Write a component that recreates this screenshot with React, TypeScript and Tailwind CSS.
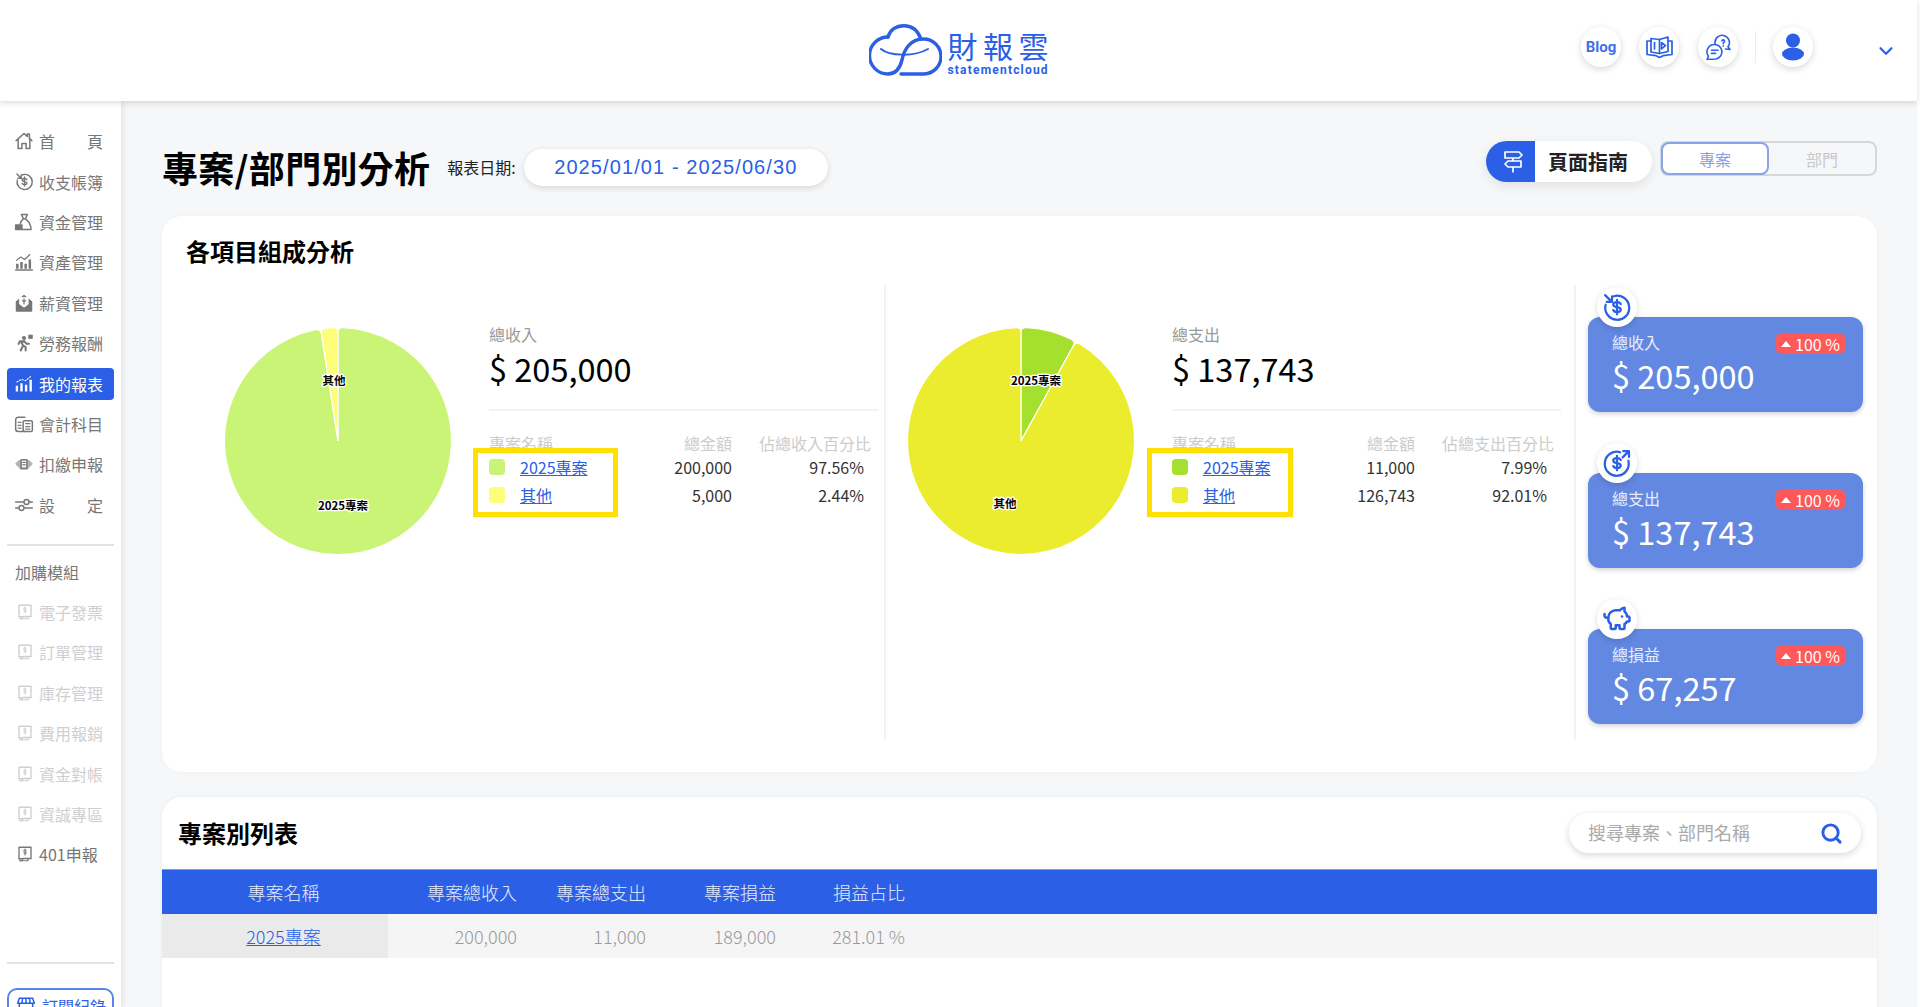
import { ChevronDown, PiggyBank, Search } from "lucide-react"
import type { ReactNode } from "react"

const BLUE = "#2a5fe6"

function Ico({ children, size = 18 }: { children: ReactNode; size?: number }) {
  return (
    <svg width={size} height={size} viewBox="0 0 24 24" fill="none" stroke="currentColor" strokeWidth="1.8" strokeLinecap="round" strokeLinejoin="round">
      {children}
    </svg>
  )
}

const Dollar = () => <path d="M15 9.6c-.5-1-1.5-1.5-3-1.5-1.7 0-3 .8-3 2 0 2.8 6 1.2 6 3.9 0 1.2-1.3 2-3 2-1.5 0-2.5-.5-3-1.5M12 6.2v11.6" />

const IncomeIcon = ({ size = 18 }: { size?: number }) => (
  <Ico size={size}>
    <path d="M9.5 3.4a9.6 9.6 0 1 1-6.6 6.8" />
    <path d="M2.5 2.5l5 5M8 3.5v4.4H3.8" />
    <Dollar />
  </Ico>
)

const ExpenseIcon = ({ size = 18 }: { size?: number }) => (
  <Ico size={size}>
    <path d="M14.5 3.4a9.6 9.6 0 1 0 6.6 6.8" />
    <path d="M16.5 7.5l5-5M17 2.5h4.6v4.6" />
    <Dollar />
  </Ico>
)

const HomeIcon = () => (
  <Ico size={20}>
    <path d="M2.5 11.5L12 3l4 3.5V3.5h2.5v5.2l3 2.8M5 9.5V21h4.5v-6h5v6H19V9.5" />
  </Ico>
)

const FundIcon = () => (
  <Ico size={20}>
    <path d="M9 3h7l-2.2 5h-2.6zM11 8.5c-2 1.5-3 3.5-3.4 5.5M14 8.5c4 3 6.500 7 6.500 12.500H10" />
    <path d="M2 15.500h7.500V21H2z" fill="currentColor" />
  </Ico>
)

const AssetIcon = () => (
  <Ico size={20}>
    <path d="M2 21.500h20" />
    <path d="M4 20v-6M9 20v-8M14 20v-6M19 20V9" strokeWidth="3" strokeLinecap="butt" />
    <path d="M3 10l5-4 5 3 6-6" strokeWidth="1.400" />
  </Ico>
)

const SalaryIcon = () => (
  <Ico size={20}>
    <path d="M3 10.500L12 3l9 7.500V21.500H3z" fill="currentColor" />
    <path d="M7 5.500h10v8l-5 3.500-5-3.500z" fill="#fff" stroke="#fff" strokeWidth="1" />
    <path d="M12 7v6M10 9.500h4" strokeWidth="1.500" />
  </Ico>
)

const LaborIcon = () => (
  <Ico size={20}>
    <circle cx="12" cy="6" r="2.500" fill="currentColor" stroke="none" />
    <path d="M8 21l3-6-2-3 3-2.500 3 3.500h3M11 15l3 2v4M12 9.500L7 10l-1.500 3" strokeWidth="2.400" />
    <path d="M18 2.500h4v4h-4z" fill="currentColor" strokeWidth="1" />
  </Ico>
)

const ReportIcon = () => (
  <Ico size={20}>
    <path d="M3.500 21v-7M9 21V11M14.500 21v-8M20 21V7" strokeWidth="2.800" strokeLinecap="butt" />
    <path d="M3.500 9.500L9 6.500l5 1.500 6-5" strokeWidth="1.300" strokeDasharray="1.500 2" />
  </Ico>
)

const AccountIcon = () => (
  <Ico size={20}>
    <path d="M13 4H5a3 3 0 0 0-3 3v11a3 3 0 0 0 3 3h8" />
    <rect x="11" y="8" width="11" height="13" rx="1.500" />
    <path d="M5 10h3.500M5 13.500h3.500M5 17h3.500M14 11.500h5M14 15h5M14 18h5" strokeWidth="1.500" />
  </Ico>
)

const TaxIcon = () => (
  <Ico size={20}>
    <path d="M1.500 11.500C4 8 7.500 6 12 6s8 2 10.500 5.500c-1 2-2.500 3.500-4 4.500l-2 3h-9l-2-3c-1.500-1-3-2.500-4-4.500z" fill="currentColor" stroke="none" opacity=".55" />
    <rect x="8.500" y="7" width="7" height="10" rx="1" fill="#fff" />
    <path d="M10.500 10h3M10.500 13h3" strokeWidth="1.300" />
  </Ico>
)

const SettingIcon = () => (
  <Ico size={20}>
    <path d="M2 8.500h9M18.500 8.500H22M2 15.500h3.500M13 15.500h9" />
    <circle cx="15" cy="8.500" r="3" />
    <circle cx="9" cy="15.500" r="3" />
  </Ico>
)

const ModuleIcon = () => (
  <Ico size={18}>
    <path d="M4 3h16v15H9.500l-2 3H5.500l-1.500-3z" />
    <path d="M4 18h16M8 18v3h8v-3" strokeWidth="1.600" />
    <path d="M14 7.500c-.4-.7-1-1-2-1-1.200 0-2 .5-2 1.300 0 1.900 4 .8 4 2.700 0 .8-.8 1.300-2 1.300-1 0-1.600-.3-2-1M12 5.500v8" strokeWidth="1.300" />
  </Ico>
)

const ShopIcon = () => (
  <Ico size={20}>
    <path d="M4 5h16l2 6H2zM4 11v9h16v-9M8 5l-1 6M12 5v6M16 5l1 6" />
  </Ico>
)

const BookVideoIcon = () => (
  <svg width="29" height="24" viewBox="0 0 29 24" fill="none" stroke={BLUE} strokeWidth="1.700" strokeLinejoin="round" strokeLinecap="round">
    <path d="M6 3.500l8.500 1 8.500-2.500v14.500l-8.500 2-8.500-1.500z" />
    <path d="M14.500 4.500V18.500" />
    <path d="M6 6H2v13.500l9 1.200 3.500 1.800 3.500-1.800 9-1.200V6h-4" />
    <path d="M16.500 7.500l4 3.200-4 3.200z" />
    <path d="M9.500 7.500v6.500" />
  </svg>
)

const ChatIcon = () => (
  <svg width="26" height="26" viewBox="0 0 26 26" fill="none" stroke={BLUE} strokeWidth="1.600" strokeLinejoin="round" strokeLinecap="round">
    <path d="M10 10.500V8.500a7.200 7.200 0 1 1 13 4.300l2 2.700-4.500-.5" />
    <path d="M17 7c0-1.200 2.500-1.800 2.500 0 0 1.300-1.300 1.200-1.300 2.700" />
    <path d="M18.200 11.800v.2" />
    <path d="M9.500 10.500a7.300 7.300 0 0 1 1.300 14.500L2 25.500l1.500-3.300a7.300 7.300 0 0 1 6-11.700z" fill="#fff" />
    <path d="M6.500 16.200h6.500M6.500 19.400h4" />
  </svg>
)

const UserIcon = () => (
  <svg width="32" height="32" viewBox="0 0 32 32" fill={BLUE}>
    <circle cx="16" cy="9.500" r="7" />
    <ellipse cx="16" cy="23" rx="11" ry="6.500" />
  </svg>
)

const SignIcon = () => (
  <svg width="22" height="24" viewBox="0 0 22 24" fill="none" stroke="#fff" strokeWidth="1.700" strokeLinejoin="round">
    <path d="M3 2h14l3 3-3 3H3zM19 11v6H6l-3-3 3-3zM11 8v3M11 17v5.500" />
  </svg>
)

const Logo = () => (
  <div className="flex items-center gap-[6px]">
    <svg width="73" height="52" viewBox="0 0 73 52" fill="none" stroke={BLUE} strokeWidth="3.400" strokeLinecap="round">
      <path d="M19 13A18 18 0 1 0 19 50C27 50 31 44 33 36C35 25 42 15 54 15A17.500 17.500 0 0 1 55 50H32" />
      <path d="M19 13C21 6 27 1.700 35 1.700C43 1.700 49 7 52 15" />
      <path d="M12 25C20 32 45 33 59 25" strokeWidth="2" />
    </svg>
    <div className="flex flex-col w-[101px] pt-[7px]">
      <span className="text-[30px] leading-[30px] font-normal tracking-[5.5px] text-[#2a5fe6] whitespace-nowrap">財報雲</span>
      <span className="mt-[3px] font-['Roboto',sans-serif] text-[12px] leading-[14px] font-bold tracking-[1.2px] text-[#2a5fe6] whitespace-nowrap">statementcloud</span>
    </div>
  </div>
)

function Header() {
  const circle = "w-10 h-10 rounded-full bg-white shadow-[0_2px_7px_rgba(0,0,0,0.16)] flex items-center justify-center"
  return (
    <header className="relative z-20 h-[101px] shrink-0 bg-white shadow-[0_2px_6px_rgba(0,0,0,0.14)] grid grid-cols-3 items-center">
      <div />
      <div className="flex justify-center pb-[1px]"><Logo /></div>
      <div className="flex items-center justify-end pr-[20px]">
        <div className="flex items-center pb-[7px]">
          <div className={circle}>
            <span className="font-['Roboto',sans-serif] font-bold text-[15px] text-[#3f70e8]">Blog</span>
          </div>
          <div className={`${circle} ml-[18px]`}><BookVideoIcon /></div>
          <div className={`${circle} ml-[19px]`}><ChatIcon /></div>
          <div className="w-px h-8 bg-[#eeeeee] ml-[17px]" />
          <div className={`${circle} ml-[17px]`}><UserIcon /></div>
        </div>
        <ChevronDown className="ml-[62px] mt-[1px]" size={22} strokeWidth={2.4} color={BLUE} />
      </div>
    </header>
  )
}

const mainMenu = [
  { label: "首頁", icon: <HomeIcon />, spread: true },
  { label: "收支帳簿", icon: <IncomeIcon size={19} /> },
  { label: "資金管理", icon: <FundIcon /> },
  { label: "資產管理", icon: <AssetIcon /> },
  { label: "薪資管理", icon: <SalaryIcon /> },
  { label: "勞務報酬", icon: <LaborIcon /> },
  { label: "我的報表", icon: <ReportIcon />, active: true },
  { label: "會計科目", icon: <AccountIcon /> },
  { label: "扣繳申報", icon: <TaxIcon /> },
  { label: "設定", icon: <SettingIcon />, spread: true },
]

const addons = ["電子發票", "訂單管理", "庫存管理", "費用報銷", "資金對帳", "資誠專區", "401申報"]

function Sidebar() {
  return (
    <aside className="relative z-10 w-[121px] shrink-0 bg-white shadow-[2px_0_6px_rgba(0,0,0,0.09)] pt-[20px]">
      {mainMenu.map((m) => (
        <div key={m.label} className="h-[40.4px] flex items-center px-[7px]">
          <div className={`w-[107px] h-8 rounded-[4px] flex items-center pl-[7px] ${m.active ? "bg-[#2a5fe6] text-white" : "text-[#777777]"}`}>
            <span className="w-[20px] flex justify-center">{m.icon}</span>
            <span className={`ml-[5px] w-16 text-[16px] leading-6 flex whitespace-nowrap ${m.spread ? "justify-between" : ""}`}>
              {m.spread ? m.label.split("").map((c) => <span key={c}>{c}</span>) : m.label}
            </span>
          </div>
        </div>
      ))}
      <div className="mx-[7px] mt-[19px] h-0.5 bg-[#e2e2e2]" />
      <div className="mt-[14px] pl-[15px] text-[16px] leading-6 text-[#777777]">加購模組</div>
      <div className="mt-2">
        {addons.map((a) => (
          <div key={a} className={`h-[40.4px] flex items-center pl-[16px] ${a === "401申報" ? "text-[#777777]" : "text-[#cfcfcf]"}`}>
            <ModuleIcon />
            <span className="ml-[5px] text-[16px] leading-6 whitespace-nowrap">{a}</span>
          </div>
        ))}
      </div>
      <div className="mx-[7px] mt-[87px] h-0.5 bg-[#e2e2e2]" />
      <div className="mx-[7px] mt-[24px] h-10 rounded-[10px] border-2 border-[#5b84e8] flex items-start pt-[4px] pl-[7px] text-[#2a5fe6]">
        <ShopIcon />
        <span className="ml-[6px] text-[16px] leading-6 whitespace-nowrap">訂閱紀錄</span>
      </div>
    </aside>
  )
}

function slice(cx: number, cy: number, r: number, a0: number, a1: number) {
  const pt = (rad: number, deg: number) => {
    const t = ((deg - 90) * Math.PI) / 180
    return `${(cx + rad * Math.cos(t)).toFixed(2)} ${(cy + rad * Math.sin(t)).toFixed(2)}`
  }
  const c = 5
  const d = (c / r) * (180 / Math.PI)
  const large = a1 - a0 - 2 * d > 180 ? 1 : 0
  return `M${cx} ${cy}L${pt(r - c, a0)}Q${pt(r, a0)} ${pt(r, a0 + d)}A${r} ${r} 0 ${large} 1 ${pt(r, a1 - d)}Q${pt(r, a1)} ${pt(r - c, a1)}Z`
}

type PieData = {
  parts: { a0: number; a1: number; color: string }[]
  labels: { text: string; x: number; y: number }[]
}

function Pie({ parts, labels }: PieData) {
  return (
    <svg width="228" height="228" viewBox="0 0 228 228" className="shrink-0">
      {parts.map((p) => (
        <path key={p.color} d={slice(114, 114, 113.500, p.a0, p.a1)} fill={p.color} stroke="#fff" strokeWidth="1.200" />
      ))}
      {labels.map((l) => (
        <text key={l.text} x={l.x} y={l.y} textAnchor="middle" dominantBaseline="central" fontSize="11.500" fontWeight="700" fill="#000" stroke="#fff" strokeWidth="2.500" paintOrder="stroke">
          {l.text}
        </text>
      ))}
    </svg>
  )
}

type Row = { name: string; color: string; amount: string; pct: string }

function Composition({ title, total, pctLabel, rows, box }: { title: string; total: string; pctLabel: string; rows: Row[]; box: string }) {
  return (
    <div className="w-[389px] shrink-0 pt-[37px]">
      <div className="text-[16px] leading-6 text-[#999999]">{title}</div>
      <div className="text-[32.5px] leading-[44px] text-black">{total}</div>
      <div className="mt-[19px] h-0.5 bg-[#f3f3f3]" />
      <div className="mt-[20px] flex h-[22px] text-[16px] leading-6 text-[#cccccc]">
        <span className="w-[243px] flex justify-between">
          <span>專案名稱</span>
          <span>總金額</span>
        </span>
        <span className="w-[139px] text-right whitespace-nowrap">{pctLabel}</span>
      </div>
      <div className="relative">
        {rows.map((r) => (
          <div key={r.name} className="h-7 flex items-center text-[16px] text-[#333333]">
            <span className="w-4 h-4 rounded-[4px]" style={{ backgroundColor: r.color }} />
            <a href="#" className="ml-[15px] text-[#2a5fe6] underline">{r.name}</a>
            <span className="ml-auto w-[100px] text-right">{r.amount}</span>
            <span className="w-[132px] mr-[14px] text-right">{r.pct}</span>
          </div>
        ))}
        <div className={`absolute top-[-5px] h-[69px] border-[5px] border-[#ffe000] ${box}`} />
      </div>
    </div>
  )
}

const summaries = [
  { label: "總收入", value: "$ 205,000", icon: <IncomeIcon size={30} /> },
  { label: "總支出", value: "$ 137,743", icon: <ExpenseIcon size={30} /> },
  { label: "總損益", value: "$ 67,257", icon: <PiggyBank size={30} strokeWidth={2} /> },
]

function SummaryCard({ label, value, icon }: { label: string; value: string; icon: ReactNode }) {
  return (
    <div className="relative w-[275px] h-[95px] rounded-[12px] bg-[#6388e2] shadow-[0_2px_5px_rgba(0,0,0,0.18)] pl-6 pt-[13px] text-white">
      <div className="absolute left-[9px] top-[-30px] w-10 h-10 rounded-full bg-white shadow-[0_2px_6px_rgba(0,0,0,0.15)] flex items-center justify-center text-[#2a5fe6]">
        {icon}
      </div>
      <div className="text-[16px] leading-6 text-white/85">{label}</div>
      <div className="text-[32.5px] leading-[42px]">{value}</div>
      <div className="absolute right-[17px] top-[16px] h-[21px] w-[71px] rounded-[8px] bg-[#ff5858] flex items-center justify-center gap-[4px] text-[16px]">
        <svg width="10" height="6" viewBox="0 0 10 6" fill="#fff"><path d="M5 0l5 6H0z" /></svg>
        <span>100 %</span>
      </div>
    </div>
  )
}

const tableCols = "grid grid-cols-[226px_129px_129px_130px_129px_1fr] items-center text-[18px]"

export default function App() {
  return (
    <div className="w-[1920px] h-[1007px] overflow-hidden bg-white flex flex-col pr-[3px] font-['Noto_Sans_CJK_TC','Noto_Sans',sans-serif]">
      <Header />
      <div className="flex flex-1 min-h-0">
        <Sidebar />
        <main className="flex-1 min-w-0 bg-[#f6f7f9] pt-[40px] pl-[41px] pr-[40px] overflow-hidden">
          <div className="flex justify-between items-start">
            <div className="flex items-center h-[52px]">
              <h1 className="text-[36px] leading-[48px] font-bold tracking-[0.3px] text-black whitespace-nowrap -mt-[1px]">專案/部門別分析</h1>
              <span className="ml-[17px] text-[16px] text-[#222222] whitespace-nowrap">報表日期:</span>
              <span className="ml-[8px] w-[304px] h-[37px] rounded-full bg-white shadow-[0_2px_6px_rgba(0,0,0,0.13)] flex items-center justify-center font-['Liberation_Sans',sans-serif] text-[20px] tracking-[1.1px] text-[#2a5fe6]">
                2025/01/01 - 2025/06/30
              </span>
            </div>
            <div className="flex">
              <div className="w-[166px] h-[41px] rounded-full bg-white shadow-[0_4px_12px_rgba(0,0,0,0.09)] flex items-center overflow-hidden">
                <span className="w-[49px] h-full bg-[#2a5fe6] flex items-center justify-center pl-[4px]"><SignIcon /></span>
                <span className="ml-[13px] text-[20px] font-bold text-[#222222] whitespace-nowrap">頁面指南</span>
              </div>
              <div className="ml-2 w-[217px] h-[35px] rounded-[8px] border-2 border-[#d6d6d6] flex text-[16px] relative">
                <span className="w-[108px] h-[33px] -ml-px -mt-px rounded-[8px] border-2 border-[#88a4ec] bg-white text-[#8a9ee8] flex items-center justify-center">專案</span>
                <span className="flex-1 text-[#c8c8c8] flex items-center justify-center">部門</span>
              </div>
            </div>
          </div>

          <section className="mt-[23px] h-[556px] rounded-[20px] bg-white shadow-[0_0_4px_rgba(0,0,0,0.03)] pt-[19px]">
            <h2 className="pl-[24px] text-[24px] leading-8 font-bold text-black">各項目組成分析</h2>
            <div className="mt-[18px] flex h-[455px]">
              <div className="w-[724px] shrink-0 border-r-2 border-[#f2f2f2] flex items-start pl-[62px]">
                <div className="pt-[42px] mr-[37px]">
                  <Pie
                    parts={[
                      { a0: 0, a1: 351.200, color: "#c9f475" },
                      { a0: 351.200, a1: 360, color: "#fefe7b" },
                    ]}
                    labels={[
                      { text: "其他", x: 110, y: 53 },
                      { text: "2025專案", x: 119, y: 178 },
                    ]}
                  />
                </div>
                <Composition
                  title="總收入"
                  total="$ 205,000"
                  pctLabel="佔總收入百分比"
                  box="left-[-16px] w-[145px]"
                  rows={[
                    { name: "2025專案", color: "#c9f475", amount: "200,000", pct: "97.56%" },
                    { name: "其他", color: "#fefe7b", amount: "5,000", pct: "2.44%" },
                  ]}
                />
              </div>
              <div className="w-[690px] shrink-0 border-r-2 border-[#f2f2f2] flex items-start pl-[21px]">
                <div className="pt-[42px] mr-[37px]">
                  <Pie
                    parts={[
                      { a0: 0, a1: 28.800, color: "#a6e02e" },
                      { a0: 28.800, a1: 360, color: "#ecec2f" },
                    ]}
                    labels={[
                      { text: "2025專案", x: 129, y: 53 },
                      { text: "其他", x: 98, y: 176 },
                    ]}
                  />
                </div>
                <Composition
                  title="總支出"
                  total="$ 137,743"
                  pctLabel="佔總支出百分比"
                  box="left-[-25px] w-[146px]"
                  rows={[
                    { name: "2025專案", color: "#a6e02e", amount: "11,000", pct: "7.99%" },
                    { name: "其他", color: "#ecec2f", amount: "126,743", pct: "92.01%" },
                  ]}
                />
              </div>
              <div className="pl-[12px] pt-[32px] flex flex-col gap-[61px]">
                {summaries.map((s) => (
                  <SummaryCard key={s.label} {...s} />
                ))}
              </div>
            </div>
          </section>

          <section className="mt-[25px] h-[400px] rounded-t-[20px] bg-white shadow-[0_0_4px_rgba(0,0,0,0.06)] overflow-hidden">
            <div className="h-[72px] flex justify-between items-start px-4">
              <h2 className="mt-[20px] text-[24px] leading-8 font-bold text-black">專案別列表</h2>
              <div className="mt-4 w-[292px] h-10 rounded-full bg-white shadow-[0_2px_7px_rgba(0,0,0,0.16)] flex items-center pl-[19px] pr-[18px] justify-between">
                <span className="text-[18px] text-[#aaaaaa] whitespace-nowrap -mt-[2px]">搜尋專案、部門名稱</span>
                <Search size={23} strokeWidth={3} color={BLUE} />
              </div>
            </div>
            <div className={`${tableCols} h-[45px] bg-[#2a5fe6] border-t border-[#7d9cee] text-[#e6ecfb] font-light`}>
              <span className="text-center pl-[17px]">專案名稱</span>
              <span className="text-right">專案總收入</span>
              <span className="text-right">專案總支出</span>
              <span className="text-right">專案損益</span>
              <span className="text-right">損益占比</span>
            </div>
            <div className={`${tableCols} h-11 bg-[#f5f5f5] text-[#999999] font-light`}>
              <span className="h-full bg-[#eaeaea] flex items-center justify-center pl-[17px]">
                <a href="#" className="text-[#2a5fe6] underline">2025專案</a>
              </span>
              <span className="text-right">200,000</span>
              <span className="text-right">11,000</span>
              <span className="text-right">189,000</span>
              <span className="text-right">281.01 %</span>
            </div>
          </section>
        </main>
      </div>
    </div>
  )
}
